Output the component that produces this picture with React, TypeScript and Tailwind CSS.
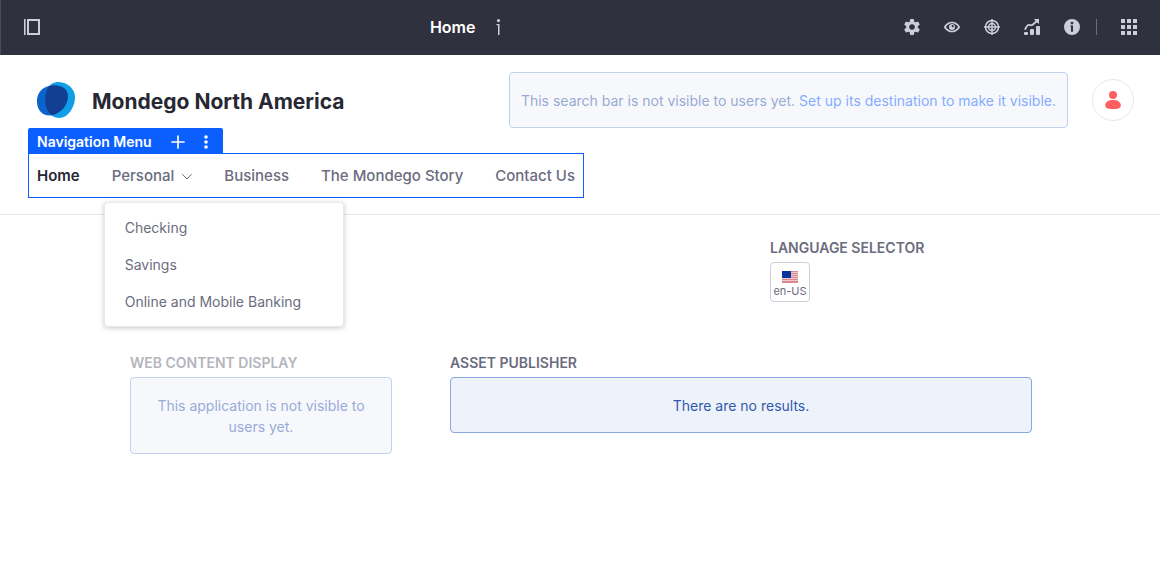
import type { ReactNode } from "react";

const navItems = ["Home", "Personal", "Business", "The Mondego Story", "Contact Us"];
const personalPages = ["Checking", "Savings", "Online and Mobile Banking"];
const gearTeeth = [0, 60, 120, 180, 240, 300];

function ToolButton({ label, children }: { label: string; children: ReactNode }) {
  return (
    <button type="button" aria-label={label} className="flex size-4 items-center justify-center text-[#cdced9]">
      <svg viewBox="0 0 16 16" className="size-4" fill="currentColor" aria-hidden="true">
        {children}
      </svg>
    </button>
  );
}

function ControlBar() {
  return (
    <header className="grid h-[55px] grid-cols-[392fr_auto_608fr] items-center border-l border-[#4a4b59] bg-[#30313f] pr-[23px] pb-px pl-[23px] text-white">
      <ToolButton label="Toggle product menu">
        <path d="M0 0h1.6v16H0zM3 0h13v16H3zM5 2v12h9V2z" fillRule="evenodd" />
      </ToolButton>
      <div className="flex items-center gap-4">
        <h1 className="text-base font-semibold">Home</h1>
        <ToolButton label="Page information">
          <circle cx="7.5" cy="1.6" r="1.6" />
          <path d="M5.500 5H8.500v11H7V6.300H5.500z" />
        </ToolButton>
      </div>
      <div className="flex items-center justify-end gap-6">
        <ToolButton label="Configure page">
          <path
            fillRule="evenodd"
            d="M8 2.3a5.7 5.7 0 1 0 0 11.4A5.7 5.7 0 0 0 8 2.3zM8 5.2a2.8 2.8 0 1 1 0 5.6 2.8 2.8 0 0 1 0-5.6z"
          />
          {gearTeeth.map((angle) => (
            <path key={angle} d="M6.3 0h3.4l.9 4-1 .6H6.4l-1-.6z" transform={`rotate(${angle} 8 8)`} />
          ))}
        </ToolButton>
        <ToolButton label="Preview">
          <path
            fillRule="evenodd"
            d="M8 2.700C4.300 2.700 1.400 5 .1 7.500a1 1 0 0 0 0 1C1.400 11 4.300 13.300 8 13.300s6.600-2.300 7.900-4.800a1 1 0 0 0 0-1C14.600 5 11.700 2.700 8 2.700zM8 4.300c2.700 0 4.900 1.800 6 3.700-1.100 1.900-3.300 3.700-6 3.700S3.100 9.900 2 8c1.100-1.900 3.300-3.700 6-3.700z"
          />
          <path
            fillRule="evenodd"
            d="M8 5a3 3 0 1 0 0 6 3 3 0 0 0 0-6zM8.700 6.100a1.100 1.100 0 1 1 0 2.200 1.100 1.100 0 0 1 0-2.200z"
          />
        </ToolButton>
        <ToolButton label="Experiences">
          <g fill="none" stroke="currentColor" strokeWidth="1.500">
            <circle cx="8" cy="8" r="6.500" />
            <circle cx="8" cy="8" r="3.500" />
            <path d="M8 0v16M0 8h16" />
          </g>
        </ToolButton>
        <ToolButton label="Content performance">
          <rect x="0" y="13" width="4" height="3" rx="1" />
          <rect x="6" y="10" width="4" height="6" rx="1" />
          <rect x="12" y="7" width="4" height="9" rx="1" />
          <path d="M1 10.800c1.500-4 3.500-5.300 4.900-4.800 2.100.8 2.600 0 7.600-4.600" fill="none" stroke="currentColor" strokeWidth="1.800" />
          <path d="M10 0h5v5l-1.700-1.200-2-2z" />
        </ToolButton>
        <ToolButton label="Information">
          <path
            fillRule="evenodd"
            d="M8 0a8 8 0 1 0 0 16A8 8 0 0 0 8 0zM8 2.700a1.400 1.400 0 1 1 0 2.800 1.400 1.400 0 0 1 0-2.800zM6.300 6.500H9v6.200H7V7.600h-.7z"
          />
        </ToolButton>
        <div className="-ml-2 h-4 w-px bg-[#6b6c7e]" />
        <ToolButton label="Applications">
          {[0, 6, 12].flatMap((y) => [0, 6, 12].map((x) => <rect key={`${x}-${y}`} x={x} y={y} width="4" height="4" rx="0.300" />))}
        </ToolButton>
      </div>
    </header>
  );
}

function SiteLogo() {
  return (
    <svg viewBox="0 0 38 36" className="h-9 w-[38px]" aria-hidden="true">
      <defs>
        <clipPath id="logo-front">
          <path d="M15 3.500C23 2.500 31 6 31 14c0 9-7 17-15 19C7 35 1 30 0 21-1 11 6 4 15 3.500z" />
        </clipPath>
      </defs>
      <path d="M15 3.500C23 2.500 31 6 31 14c0 9-7 17-15 19C7 35 1 30 0 21-1 11 6 4 15 3.500z" fill="#0b63ce" />
      <path d="M20 0c9-.5 18 6 18 15 0 10-7 21-16 21C13 36 8 27 8 18 8 9 11 1 20 0z" fill="#109fe6" />
      <path d="M20 0c9-.5 18 6 18 15 0 10-7 21-16 21C13 36 8 27 8 18 8 9 11 1 20 0z" fill="#123f91" clipPath="url(#logo-front)" />
    </svg>
  );
}

function NavigationMenu() {
  return (
    <div className="w-max">
      <div className="flex h-[25px] w-[195px] items-center rounded-t-xs bg-[#0b5fff] pt-[2px] pl-[9px] text-white">
        <span className="flex-1 text-sm font-semibold">Navigation Menu</span>
        <div className="mr-[9px] flex gap-3">
          <button type="button" aria-label="Add page" className="size-4">
            <svg viewBox="0 0 16 16" className="size-4" fill="none" stroke="currentColor" strokeWidth="1.700" strokeLinecap="round">
              <path d="M8 2v12M2 8h12" />
            </svg>
          </button>
          <button type="button" aria-label="More options" className="size-4">
            <svg viewBox="0 0 16 16" className="size-4" fill="currentColor">
              <circle cx="8" cy="3" r="1.800" />
              <circle cx="8" cy="8" r="1.800" />
              <circle cx="8" cy="13" r="1.800" />
            </svg>
          </button>
        </div>
      </div>
      <nav className="flex h-[45px] items-center gap-8 border border-[#0b5fff] px-2 pt-[2px] text-[15px] font-medium text-[#6b6c7e]">
        {navItems.map((item) =>
          item === "Personal" ? (
            <div key={item} className="relative">
              <a href="#personal" className="flex items-center gap-2">
                {item}
                <svg viewBox="0 0 10 10" className="mt-px size-[10px]" fill="none" stroke="currentColor" strokeLinecap="round">
                  <path d="M.6 2.500 5 7l4.400-4.500" />
                </svg>
              </a>
              <ul className="absolute top-[37px] -left-2 z-10 w-[240px] rounded-sm border border-[#e7e7ed] bg-white py-[6px] text-sm font-normal shadow-[0_1px_5px_rgba(39,40,51,0.25)]">
                {personalPages.map((page) => (
                  <li key={page}>
                    <a href="#personal" className="flex h-[37px] items-center px-5">
                      {page}
                    </a>
                  </li>
                ))}
              </ul>
            </div>
          ) : (
            <a key={item} href="#page" className={item === "Home" ? "font-semibold text-[#272833]" : ""}>
              {item}
            </a>
          ),
        )}
      </nav>
    </div>
  );
}

function SiteHeader() {
  return (
    <div className="border-b border-[#e7e7ed] pt-[17px] pr-[26px] pb-4 pl-7">
      <div className="flex h-14 items-center">
        <a href="#home" className="flex items-center gap-[17px] pl-[9px]">
          <SiteLogo />
          <span className="pt-1 text-[21px] leading-8 font-bold text-[#272833]">Mondego North America</span>
        </a>
        <p className="mr-6 ml-auto flex h-14 items-center gap-1 rounded-sm border border-[#c0d1ee] bg-[#f7f8fc] px-[11px] pt-[2px] text-sm text-[#97abd3]">
          This search bar is not visible to users yet.
          <a href="#destination" className="text-[#85adff]">
            Set up its destination to make it visible.
          </a>
        </p>
        <button type="button" aria-label="User profile" className="flex size-[42px] items-center justify-center rounded-full border border-[#e7e7ed]">
          <svg viewBox="0 0 16 18" className="h-[18px] w-4" fill="#ff5f5f">
            <circle cx="8" cy="4" r="4" />
            <path d="M.2 14.500C.2 11 3.200 9 8 9s7.800 2 7.800 5.500C15.800 17.500 12 18 8 18S.2 17.500.2 14.500z" />
          </svg>
        </button>
      </div>
      <NavigationMenu />
    </div>
  );
}

function UsFlag() {
  return (
    <svg viewBox="0 0 16 12" className="h-3 w-4" aria-hidden="true">
      <rect width="16" height="12" fill="#f0c8cb" />
      <path d="M0 .5h16M0 2.500h16M0 4.500h16M0 6.500h16M0 8.500h16M0 10.500h16" stroke="#d98990" />
      <path d="M0 11.500h16" stroke="#d98990" />
      <rect width="9" height="7" fill="#08359b" />
    </svg>
  );
}

export default function App() {
  return (
    <div className="min-h-screen bg-white font-['Inter',sans-serif]">
      <ControlBar />
      <SiteHeader />
      <main className="mx-auto grid max-w-[960px] grid-cols-3 pt-[23px] text-sm text-[#6b6c7e]">
        <section className="col-start-3 h-[115px] pr-7 pl-[30px]">
          <h2 className="font-semibold uppercase leading-5">Language Selector</h2>
          <button type="button" className="mt-1 flex size-10 flex-col items-center justify-center gap-px rounded-sm border border-[#cdced9] pt-1 text-[11px] leading-[14px]">
            <UsFlag />
            en-US
          </button>
        </section>
        <section className="col-start-1 pr-7 pl-[30px]">
          <h2 className="font-semibold uppercase leading-5 text-[#b5b5be]">Web Content Display</h2>
          <p className="mt-1 rounded-sm border border-[#c0d1f2] bg-[#f7f8fc] px-4 pt-[17px] pb-4 text-center leading-[21px] text-[#97abd9]">
            This application is not visible to users yet.
          </p>
        </section>
        <section className="col-span-2 pr-7 pl-[30px]">
          <h2 className="font-semibold uppercase leading-5">Asset Publisher</h2>
          <p className="mt-1 rounded-sm border border-[#89a7e0] bg-[#eef2fa] px-4 pt-[17px] pb-4 text-center leading-[21px] text-[#2e5aac]">
            There are no results.
          </p>
        </section>
      </main>
    </div>
  );
}
